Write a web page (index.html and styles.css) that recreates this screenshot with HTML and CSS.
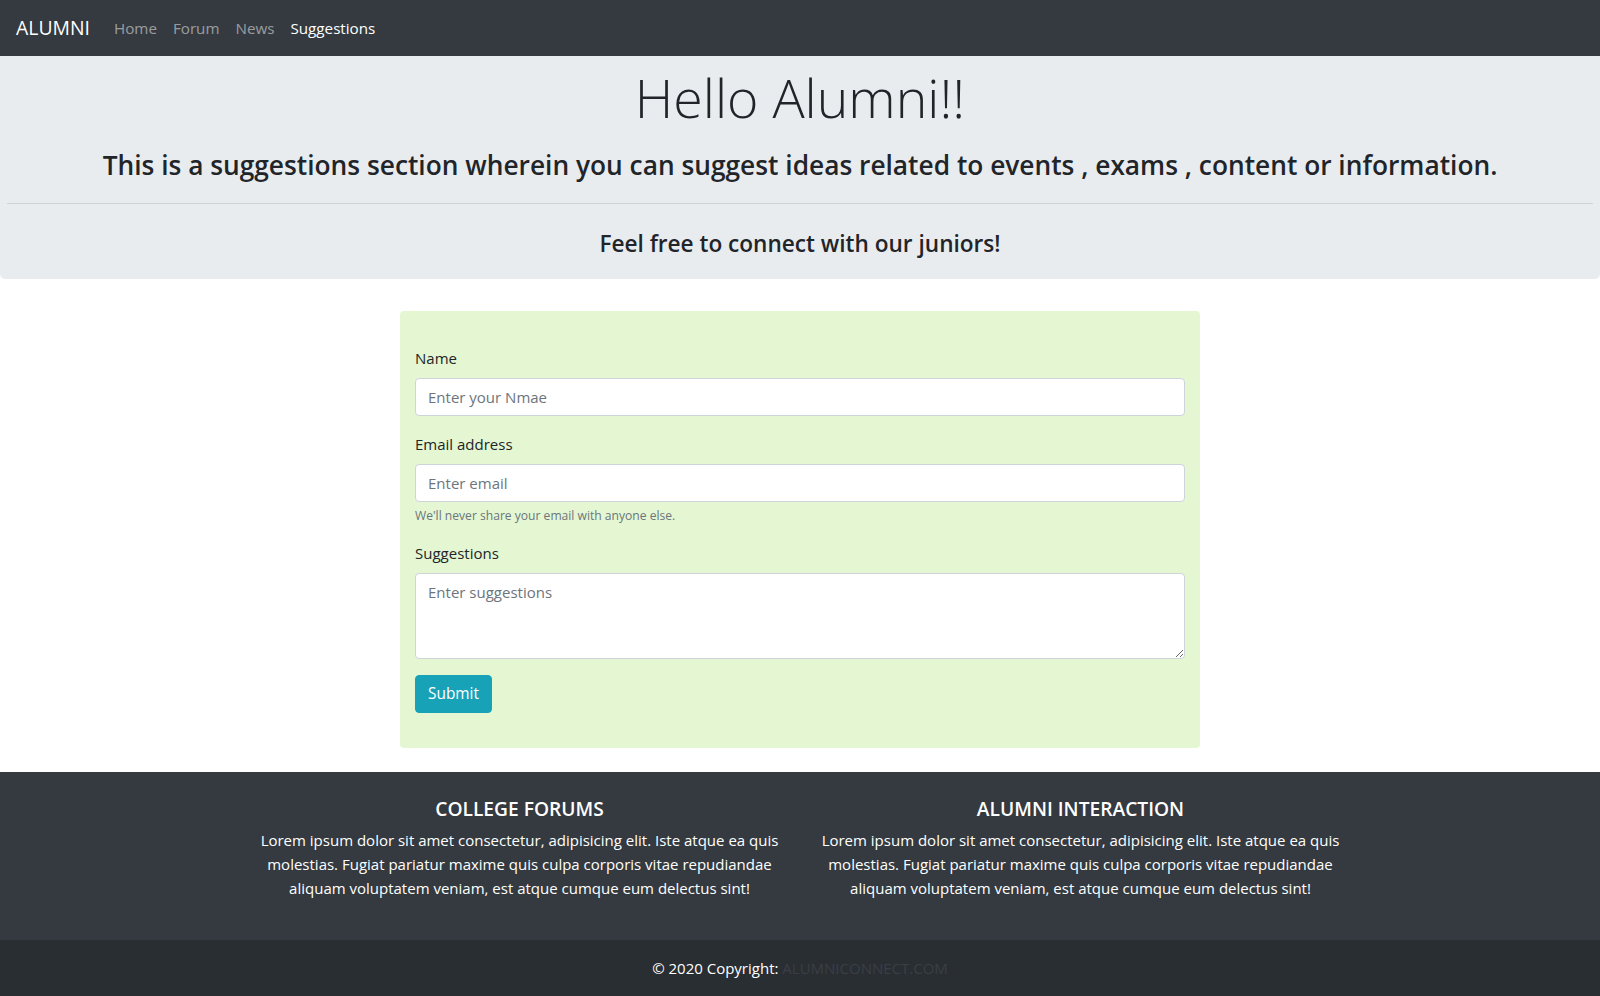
FILE: index.html
```html
<!DOCTYPE html>
<html lang="en">
<head>
<meta charset="utf-8">
<title>Alumni - Suggestions</title>
<link rel="stylesheet" href="styles.css">
</head>
<body>
<nav class="navbar">
  <a class="brand" href="#">ALUMNI</a>
  <ul class="nav">
    <li><a class="nav-link" href="#">Home</a></li>
    <li><a class="nav-link" href="#">Forum</a></li>
    <li><a class="nav-link" href="#">News</a></li>
    <li><a class="nav-link active" href="#">Suggestions</a></li>
  </ul>
</nav>

<section class="jumbotron">
  <h1 class="display">Hello Alumni!!</h1>
  <h3 class="lead-title">This is a suggestions section wherein you can suggest ideas related to events , exams , content or information.</h3>
  <hr class="divider">
  <h4 class="sub-title">Feel free to connect with our juniors!</h4>
</section>

<main class="form-wrap">
  <form class="form">
    <div class="form-group">
      <label for="name">Name</label>
      <input id="name" class="form-control" type="text" placeholder="Enter your Nmae">
    </div>
    <div class="form-group">
      <label for="email">Email address</label>
      <input id="email" class="form-control" type="email" placeholder="Enter email">
      <small class="help">We'll never share your email with anyone else.</small>
    </div>
    <div class="form-group">
      <label for="sugg">Suggestions</label>
      <textarea id="sugg" class="form-control textarea" rows="3" placeholder="Enter suggestions"></textarea>
    </div>
    <button type="submit" class="btn">Submit</button>
  </form>
</main>

<footer class="footer">
  <div class="footer-cols">
    <div class="footer-col">
      <h5 class="footer-title">COLLEGE FORUMS</h5>
      <p class="footer-text">Lorem ipsum dolor sit amet consectetur, adipisicing elit. Iste atque ea quis molestias. Fugiat pariatur maxime quis culpa corporis vitae repudiandae aliquam voluptatem veniam, est atque cumque eum delectus sint!</p>
    </div>
    <div class="footer-col">
      <h5 class="footer-title">ALUMNI INTERACTION</h5>
      <p class="footer-text">Lorem ipsum dolor sit amet consectetur, adipisicing elit. Iste atque ea quis molestias. Fugiat pariatur maxime quis culpa corporis vitae repudiandae aliquam voluptatem veniam, est atque cumque eum delectus sint!</p>
    </div>
  </div>
  <div class="copyright">© 2020 Copyright: <a class="copy-link" href="#">ALUMNICONNECT.COM</a></div>
</footer>
</body>
</html>
```
FILE: styles.css
```css
* { box-sizing: border-box; }
html, body { margin: 0; padding: 0; }
body {
  font-family: "Open Sans", "Noto Sans", "Liberation Sans", sans-serif;
  font-size: 15px;
  line-height: 24px;
  color: #212529;
  background: #fff;
}
a { text-decoration: none; }

.navbar {
  display: flex;
  align-items: center;
  height: 56px;
  padding: 8px 16px;
  background: #343a40;
}
.brand {
  color: #fff;
  font-size: 19.4px;
  line-height: 30px;
  margin-right: 16px;
}
.nav {
  display: flex;
  list-style: none;
  margin: 0;
  padding: 0;
}
.nav-link {
  display: block;
  padding: 8px 8px;
  color: rgba(255,255,255,.5);
  font-size: 15.2px;
}
.nav-link.active { color: #fff; }

.jumbotron {
  background: #e9ecef;
  border-radius: 0 0 5px 5px;
  padding: 8px 7px 22px;
  margin-bottom: 32px;
  text-align: center;
}
.display {
  font-size: 53.6px;
  font-weight: 300;
  line-height: 67px;
  margin: 0 0 18px;
}
.lead-title {
  font-size: 26.3px;
  font-weight: 600;
  line-height: 32px;
  margin: 0;
}
.divider {
  border: 0;
  border-top: 1px solid rgba(0,0,0,.1);
  margin: 22px 0 26px;
}
.sub-title {
  font-size: 22.6px;
  font-weight: 600;
  line-height: 27px;
  margin: 0;
}

.form-wrap {
  width: 800px;
  margin: 0 auto 24px;
  background: #e4f7d2;
  border-radius: 4px;
  padding: 35px 15px 35px;
}
.form { margin: 0; }
.form-group { margin-bottom: 16px; }
.form-group label {
  display: block;
  margin-bottom: 8px;
  line-height: 24px;
}
.form-control {
  display: block;
  width: 100%;
  height: 38px;
  padding: 6px 12px;
  font-family: inherit;
  font-size: 15px;
  line-height: 24px;
  color: #495057;
  background: #fff;
  border: 1px solid #ced4da;
  border-radius: 4px;
  margin: 0;
}
.form-control::placeholder { color: #6c757d; }
.textarea { height: 86px; resize: vertical; }
.help {
  display: block;
  margin-top: 4px;
  font-size: 12.1px;
  line-height: 19px;
  color: #6c757d;
}
.btn {
  display: inline-block;
  font-family: inherit;
  font-size: 15.4px;
  line-height: 24px;
  padding: 6px 12px;
  color: #fff;
  background: #17a2b8;
  border: 1px solid #17a2b8;
  border-radius: 4px;
}

.footer {
  background: #343a40;
  color: #fff;
}
.footer-cols {
  display: grid;
  grid-template-columns: 541px 541px;
  column-gap: 20px;
  justify-content: center;
  padding: 25px 0 40px;
  text-align: center;
}
.footer-title {
  font-size: 19.2px;
  font-weight: 600;
  line-height: 23px;
  margin: 0 0 8px;
}
.footer-text { margin: 0; }
.copyright {
  background: rgba(0,0,0,.2);
  text-align: center;
  padding: 16px 0;
  height: 57px;
  line-height: 24px;
}
.copy-link { color: #393f45; }
```
